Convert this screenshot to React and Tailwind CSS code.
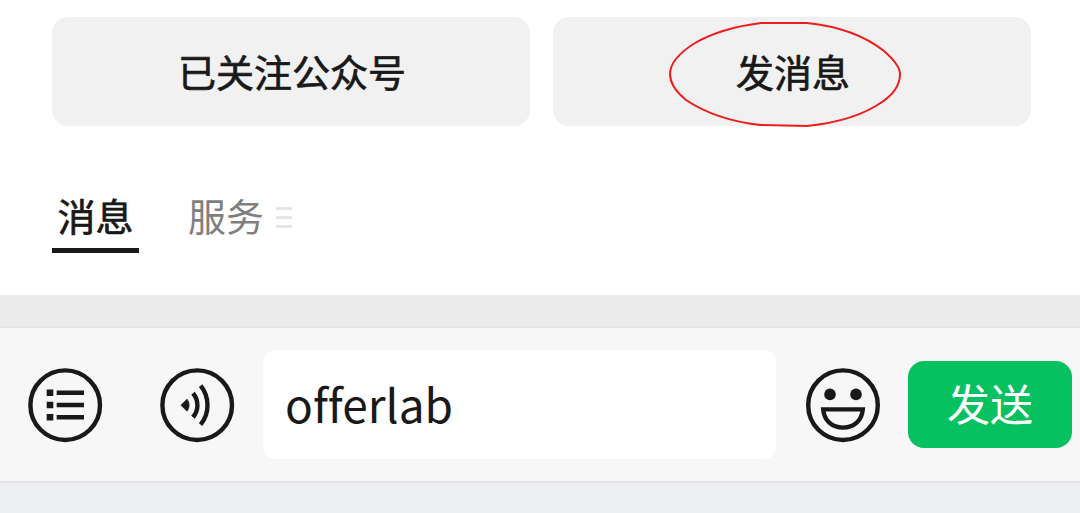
import React from 'react';

const ListIcon = () => (
    <svg width="76" height="76" viewBox="0 0 76 76" fill="none" stroke="#191919">
        <circle cx="38.2" cy="38.2" r="34.8" strokeWidth="4.4" />
        <path d="M19.7 25.8h6.6M19.7 38h6.6M19.7 50.3h6.6" strokeWidth="6.6" />
        <path d="M29.7 25.8h27.3M29.7 38h27.3M29.7 50.3h27.3" strokeWidth="4.6" />
    </svg>
);

const VoiceIcon = () => (
    <svg width="76" height="76" viewBox="0 0 76 76" fill="none" stroke="#191919">
        <circle cx="38.2" cy="38.2" r="34.8" strokeWidth="4.4" />
        <path d="M22 38.2l6-6a9.5 9.5 0 0 1 0 12z" fill="#191919" strokeWidth="0.8" />
        <path d="M34 26.2a18.5 18.5 0 0 1 0 24M41.6 18.7a31 31 0 0 1 0 39" strokeWidth="4.4" />
    </svg>
);

const SmileIcon = () => (
    <svg width="76" height="76" viewBox="0 0 76 76" fill="none" stroke="#191919">
        <circle cx="38" cy="38.2" r="34.8" strokeWidth="4.4" />
        <circle cx="25" cy="27.4" r="5.8" fill="#191919" stroke="none" />
        <circle cx="51" cy="27.4" r="5.8" fill="#191919" stroke="none" />
        <path d="M18.2 42.4h39.6c-1 11.2-8.6 18.2-19.8 18.2s-18.8-7-19.8-18.2z" strokeWidth="4.4" />
    </svg>
);

const ActionButton = ({ children }) => (
    <button className="relative flex h-[109px] flex-1 items-center justify-center rounded-2xl bg-[#f1f1f1] pb-px pl-[2px] text-[38px] leading-none text-[#191919] [-webkit-text-stroke:0.7px_#191919]">
        {children}
    </button>
);

const App = () => {
    return (
        <div className="flex h-[513px] w-[1080px] flex-col overflow-hidden bg-white font-['Noto_Sans_CJK_SC',sans-serif]">
            {/* Account actions */}
            <div className="flex gap-[23px] pt-[17px] pr-[49px] pl-[52px]">
                <ActionButton>已关注公众号</ActionButton>
                <ActionButton>
                    发消息
                    <svg className="absolute top-[3px] left-[115px]" width="234" height="109" viewBox="0 0 234 109" fill="none">
                        <path
                            d="M93 3H139Q187 8 216 31Q232 45 232 54C232 65 226 74 214 82Q187 101 139 106L92 105Q48 100 18 80Q2 67 2 54C2 43 11 33 27 23Q53 8 93 3Z"
                            stroke="#f01c1c"
                            strokeWidth="2"
                        />
                    </svg>
                </ActionButton>
            </div>

            {/* Tabs */}
            <div className="flex h-[169px] items-start pt-[66px] pl-[52px] text-[38px] leading-[46px]">
                <div className="h-[61px] w-[87px] border-b-[5px] border-[#191919] text-center text-[#191919] [-webkit-text-stroke:0.7px_#191919]">
                    消息
                </div>
                <div className="ml-[49px] text-[#7f7f7f]">服务</div>
                <div className="mt-[15px] ml-[12px] flex w-4 flex-col gap-[6px]">
                    <span className="h-[3px] bg-[#e6e6e6]" />
                    <span className="h-[3px] bg-[#e6e6e6]" />
                    <span className="h-[3px] bg-[#e6e6e6]" />
                </div>
            </div>

            <div className="h-[31px] bg-[#ececec]" />

            {/* Message input */}
            <div className="flex h-[157px] items-center border-y-2 border-[#e3e3e4] bg-[#f7f7f7] pl-[27px]">
                <ListIcon />
                <div className="ml-[56px]"><VoiceIcon /></div>
                <div className="ml-[28px] flex h-[109px] w-[513px] items-center rounded-xl bg-white pb-[3px] pl-[22px] text-[46px] leading-none text-[#191919] [font-variant-ligatures:none]">
                    offerlab
                </div>
                <div className="ml-[29px]"><SmileIcon /></div>
                <button className="ml-[27px] h-[87px] w-[164px] rounded-2xl bg-[#07c160] pb-[5px] text-[43px] leading-none text-white">
                    发送
                </button>
            </div>

            <div className="flex-1 bg-[#edeef2]" />
        </div>
    );
};

export default App;
